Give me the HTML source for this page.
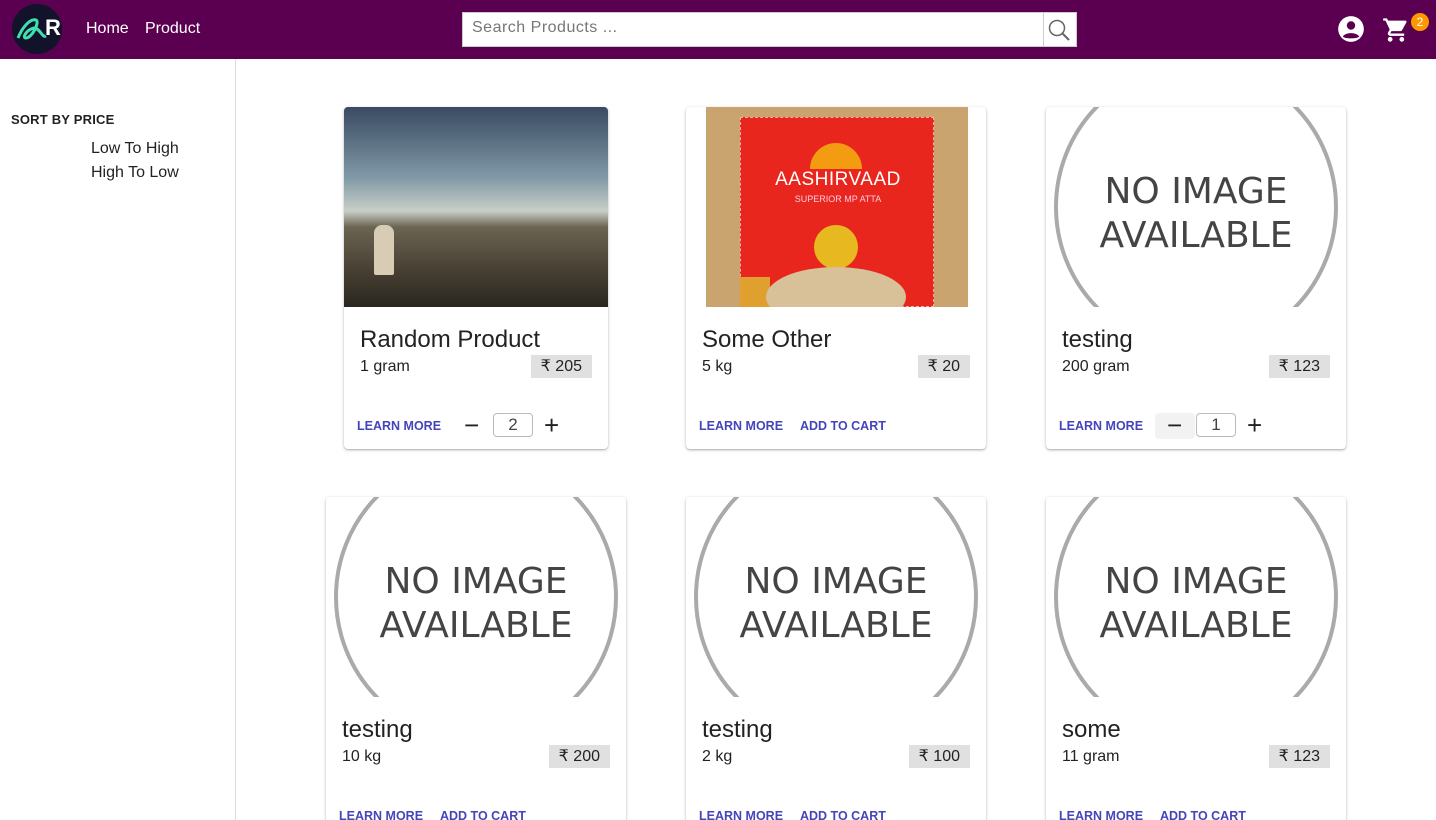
<!DOCTYPE html>
<html><head><meta charset="utf-8"><style>
*{box-sizing:border-box;margin:0;padding:0}
html,body{width:1436px;height:820px;overflow:hidden}
body{background:#fff;font-family:"Liberation Sans",sans-serif;position:relative;color:#222}
.bar{position:absolute;left:0;top:0;width:1436px;height:59px;background:#5b0050}
.a{position:absolute}
.card{position:absolute;background:#fff;box-shadow:0 1px 3px rgba(0,0,0,.25),0 1px 1px rgba(0,0,0,.12);border-radius:4px;overflow:hidden}
.title{position:absolute;left:16px;top:219px;font-size:24px;color:#222}
.wt{position:absolute;left:16px;top:251px;font-size:16px;color:#222}
.price{position:absolute;right:16px;top:248px;height:23px;line-height:23px;background:#e0e0e0;padding:0 10px;font-size:16px;color:#222}
.lm{position:absolute;left:13px;top:312px;font-size:12.5px;font-weight:bold;color:#4444bb;letter-spacing:0}
.atc{position:absolute;left:114px;top:312px;font-size:12.5px;font-weight:bold;color:#4444bb;letter-spacing:0}
.qty{position:absolute;top:306px;width:40px;height:24px;border:1.5px solid #bbb;border-radius:4px;text-align:center;line-height:21px;font-size:17px;color:#444}
.op{position:absolute;top:303px;font-size:26px;line-height:30px;color:#222}
.img{position:absolute;left:0;top:0;width:100%;height:200px;overflow:hidden}
</style></head><body>
<div class="bar"></div>
<div class="a" style="left:12px;top:4px;width:50px;height:50px;border-radius:50%;background:#12122a"></div>
<svg class="a" style="left:12px;top:4px" width="50" height="50"><path d="M6 34 C10 24 18 14 24 16 C28 18 20 34 14 34 C10 34 14 26 22 24 C28 24 30 34 34 32" fill="none" stroke="#3fe0b0" stroke-width="3"/></svg>
<div class="a" style="left:45px;top:15px;color:#fff;font-size:22px;font-weight:bold">R</div>
<div class="a" style="left:86px;top:20px;color:#fff;font-size:16px">Home</div>
<div class="a" style="left:145px;top:20px;color:#fff;font-size:16px">Product</div>
<div class="a" style="left:462px;top:12px;width:615px;height:35px;background:#fff;border:1px solid #ccc"></div>
<div class="a" style="left:472px;top:19px;font-size:16px;color:#777;letter-spacing:.5px">Search Products ...</div>
<div class="a" style="left:1043px;top:12px;width:1px;height:35px;background:#ccc"></div>
<svg class="a" style="left:1047px;top:18px" width="26" height="26"><circle cx="10" cy="10" r="7.5" fill="none" stroke="#666" stroke-width="1.5"/><path d="M15.5 15.5 L22 22" stroke="#666" stroke-width="2"/></svg>
<svg class="a" style="left:1337px;top:15px" width="28" height="28" viewBox="0 0 24 24"><circle cx="12" cy="12" r="11" fill="#fff"/><circle cx="12" cy="9" r="3.6" fill="#5b0050"/><path d="M5 18.5 C7 14.5 17 14.5 19 18.5 C17 20.5 7 20.5 5 18.5Z" fill="#5b0050"/></svg>
<svg class="a" style="left:1382px;top:16px" width="28" height="28" viewBox="0 0 24 24"><path fill="#fff" d="M7 18c-1.1 0-2 .9-2 2s.9 2 2 2 2-.9 2-2-.9-2-2-2zM1 2v2h2l3.6 7.59-1.35 2.450c-.16.28-.25.61-.25.96 0 1.1.9 2 2 2h12v-2H7.42c-.14 0-.25-.11-.25-.25l.03-.12.9-1.63h7.45c.75 0 1.410-.41 1.75-1.03l3.58-6.49A1 1 0 0 0 20 4H5.21l-.94-2H1zm16 16c-1.1 0-2 .9-2 2s.9 2 2 2 2-.9 2-2-.9-2-2-2z"/></svg>
<div class="a" style="left:1411px;top:13px;width:18px;height:18px;border-radius:50%;background:#ff9800;color:#fff;font-size:12px;text-align:center;line-height:18px">2</div>
<div class="a" style="left:235px;top:59px;width:1px;height:761px;background:#ddd"></div>
<div class="a" style="left:11px;top:112px;font-size:13px;font-weight:bold;color:#222;letter-spacing:.2px">SORT BY PRICE</div>
<div class="a" style="left:91px;top:140px;font-size:16px;color:#222">Low To High</div>
<div class="a" style="left:91px;top:164px;font-size:16px;color:#222">High To Low</div>

<div class="card" style="left:344px;top:107px;width:264px;height:342px">
<div class="img" style="background:linear-gradient(180deg,#3a4a62 0%,#7f98a6 35%,#c8cfc6 52%,#6b6452 60%,#4a4234 80%,#2a261f 100%)">
<div class="a" style="left:30px;top:118px;width:20px;height:50px;background:#d8cdb4;border-radius:8px 8px 2px 2px"></div></div>
<div class="title">Random Product</div><div class="wt">1 gram</div><div class="price">₹ 205</div>
<div class="lm">LEARN MORE</div><div class="op" style="left:120px">−</div><div class="qty" style="left:149px">2</div><div class="op" style="left:200px">+</div>
</div>

<div class="card" style="left:686px;top:107px;width:300px;height:342px">
<div class="img">
<div class="a" style="left:20px;top:0;width:262px;height:200px;background:#c9a46e"></div>
<div class="a" style="left:54px;top:10px;width:194px;height:190px;background:#e8261e;border:1px dashed #f4b0a0"></div>
<div class="a" style="left:124px;top:36px;width:52px;height:26px;background:#f39c12;border-radius:26px 26px 0 0"></div>
<div class="a" style="left:52px;top:62px;width:200px;text-align:center;color:#fff;font-size:19px;letter-spacing:.5px">AASHIRVAAD</div>
<div class="a" style="left:52px;top:87px;width:200px;text-align:center;color:#fcd;font-size:9px">SUPERIOR MP ATTA</div>
<div class="a" style="left:128px;top:118px;width:44px;height:44px;border-radius:50%;background:#e8b820"></div>
<div class="a" style="left:54px;top:170px;width:30px;height:30px;background:#e0a030"></div>
<div class="a" style="left:80px;top:160px;width:140px;height:60px;border-radius:50%;background:#d8c098"></div>
</div>
<div class="title">Some Other</div><div class="wt">5 kg</div><div class="price">₹ 20</div>
<div class="lm">LEARN MORE</div><div class="atc">ADD TO CART</div>
</div>

<div class="card" style="left:1046px;top:107px;width:300px;height:342px">
<svg class="a" style="left:0;top:0" width="300" height="200"><ellipse cx="150" cy="100" rx="140" ry="142" fill="none" stroke="#aaa" stroke-width="4"/><text x="150" y="96" text-anchor="middle" font-family="DejaVu Sans,sans-serif" font-size="36" fill="#444">NO IMAGE</text><text x="150" y="140" text-anchor="middle" font-family="DejaVu Sans,sans-serif" font-size="36" fill="#444">AVAILABLE</text></svg>
<div class="title">testing</div><div class="wt">200 gram</div><div class="price">₹ 123</div>
<div class="lm">LEARN MORE</div><div class="a" style="left:109px;top:306px;width:40px;height:26px;background:#f2f2f2;border-radius:4px"></div><div class="op" style="left:121px">−</div><div class="qty" style="left:150px">1</div><div class="op" style="left:201px">+</div>
</div>

<div class="card" style="left:326px;top:497px;width:300px;height:342px">
<svg class="a" style="left:0;top:0" width="300" height="200"><ellipse cx="150" cy="100" rx="140" ry="142" fill="none" stroke="#aaa" stroke-width="4"/><text x="150" y="96" text-anchor="middle" font-family="DejaVu Sans,sans-serif" font-size="36" fill="#444">NO IMAGE</text><text x="150" y="140" text-anchor="middle" font-family="DejaVu Sans,sans-serif" font-size="36" fill="#444">AVAILABLE</text></svg>
<div class="title">testing</div><div class="wt">10 kg</div><div class="price">₹ 200</div>
<div class="lm">LEARN MORE</div><div class="atc">ADD TO CART</div>
</div>
<div class="card" style="left:686px;top:497px;width:300px;height:342px">
<svg class="a" style="left:0;top:0" width="300" height="200"><ellipse cx="150" cy="100" rx="140" ry="142" fill="none" stroke="#aaa" stroke-width="4"/><text x="150" y="96" text-anchor="middle" font-family="DejaVu Sans,sans-serif" font-size="36" fill="#444">NO IMAGE</text><text x="150" y="140" text-anchor="middle" font-family="DejaVu Sans,sans-serif" font-size="36" fill="#444">AVAILABLE</text></svg>
<div class="title">testing</div><div class="wt">2 kg</div><div class="price">₹ 100</div>
<div class="lm">LEARN MORE</div><div class="atc">ADD TO CART</div>
</div>
<div class="card" style="left:1046px;top:497px;width:300px;height:342px">
<svg class="a" style="left:0;top:0" width="300" height="200"><ellipse cx="150" cy="100" rx="140" ry="142" fill="none" stroke="#aaa" stroke-width="4"/><text x="150" y="96" text-anchor="middle" font-family="DejaVu Sans,sans-serif" font-size="36" fill="#444">NO IMAGE</text><text x="150" y="140" text-anchor="middle" font-family="DejaVu Sans,sans-serif" font-size="36" fill="#444">AVAILABLE</text></svg>
<div class="title">some</div><div class="wt">11 gram</div><div class="price">₹ 123</div>
<div class="lm">LEARN MORE</div><div class="atc">ADD TO CART</div>
</div>
</body></html>
